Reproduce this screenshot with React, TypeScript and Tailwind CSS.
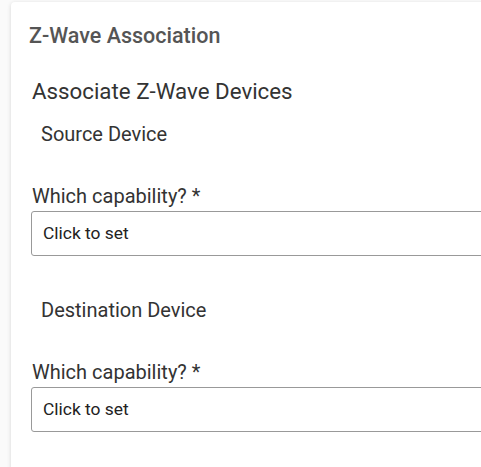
export default function App() {
  const font = { fontFamily: "Roboto, 'Noto Sans', sans-serif" };
  return (
    <div className="min-h-[467px] bg-[#fafafa] pl-[11px] pt-[2px] overflow-hidden" style={font}>
      <div className="bg-white min-h-[480px] w-[500px] rounded-tl-[4px] shadow-[0_1px_4px_rgba(0,0,0,0.15)] pl-[18px] pt-[20px]">
        <h2 className="text-[21.5px] font-medium text-[#555] leading-[28px]">Z-Wave Association</h2>
        <div className="pl-[3px] pt-[27px]">
          <h3 className="text-[22.3px] text-[#333] leading-[28px]">Associate Z-Wave Devices</h3>
          <Section title="Source Device" top="pt-[17px]" />
          <Section title="Destination Device" top="pt-[42px]" />
        </div>
      </div>
    </div>
  );
}

function Section({ title, top }: { title: string; top: string }) {
  return (
    <div className={top}>
      <div className="pl-[9px] text-[20px] text-[#333] leading-[24px]">{title}</div>
      <div className="pt-[38px] text-[20px] text-[#333] leading-[24px]">Which capability? *</div>
      <div className="mt-[3px] -ml-[1px] h-[45px] border border-[#999] rounded-[3px] flex items-center pl-[11px] text-[17.4px] text-[#222]">
        Click to set
      </div>
    </div>
  );
}
